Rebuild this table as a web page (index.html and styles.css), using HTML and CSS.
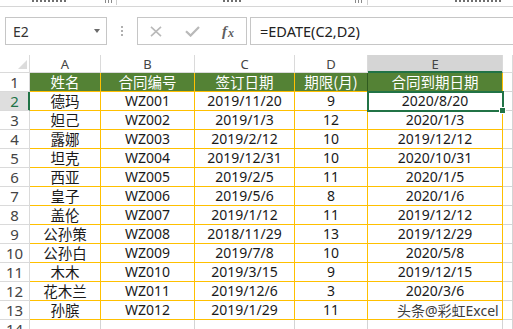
FILE: index.html
```html
<!DOCTYPE html>
<html lang="zh-CN">
<head>
<meta charset="utf-8">
<title>EDATE</title>
<link rel="stylesheet" href="styles.css">
</head>
<body>
<div class="ribbon">
  <span class="frag f1"></span>
  <span class="icon i1"></span>
  <span class="sep s1"></span>
  <span class="frag f2"></span>
  <span class="icon i2"></span>
  <span class="sep s2"></span>
  <span class="frag f3"></span>
</div>

<div class="fbar">
  <div class="namebox"><span>E2</span><span class="tri"></span></div>
  <div class="dots"><i></i><i></i><i></i></div>
  <div class="fnbox">
    <svg class="ico-x" width="12" height="11" viewBox="0 0 12 11"><path d="M1 0.8 L11 10.2 M11 0.8 L1 10.2" stroke="#b9b9b9" stroke-width="1.6" fill="none"/></svg>
    <svg class="ico-ok" width="15" height="11" viewBox="0 0 15 11"><path d="M1 5.2 L5.6 9.6 L14 1" stroke="#b9b9b9" stroke-width="2.2" fill="none"/></svg>
    <span class="fx"><span class="fx-f">f</span><span class="fx-x">x</span></span>
  </div>
  <div class="formula">=EDATE(C2,D2)</div>
</div>

<div class="sheet">
  <div class="row colhead">
    <div class="corner"><span class="corner-tri"></span></div>
    <div>A</div><div>B</div><div>C</div><div>D</div><div class="colsel">E</div><div></div>
  </div>
  <div class="row">
    <div class="rh">1</div>
    <div class="c hd zh">姓名</div><div class="c hd zh">合同编号</div><div class="c hd zh">签订日期</div><div class="c hd zh dsel">期限(月)</div><div class="c hd zh">合同到期日期</div><div class="g"></div>
  </div>
  <div class="row">
    <div class="rh rsel">2</div>
    <div class="c zh">德玛</div><div class="c">WZ001</div><div class="c">2019/11/20</div><div class="c">9</div><div class="c">2020/8/20</div><div class="g"></div>
  </div>
  <div class="row">
    <div class="rh">3</div>
    <div class="c zh">妲己</div><div class="c">WZ002</div><div class="c">2019/1/3</div><div class="c">12</div><div class="c">2020/1/3</div><div class="g"></div>
  </div>
  <div class="row">
    <div class="rh">4</div>
    <div class="c zh">露娜</div><div class="c">WZ003</div><div class="c">2019/2/12</div><div class="c">10</div><div class="c">2019/12/12</div><div class="g"></div>
  </div>
  <div class="row">
    <div class="rh">5</div>
    <div class="c zh">坦克</div><div class="c">WZ004</div><div class="c">2019/12/31</div><div class="c">10</div><div class="c">2020/10/31</div><div class="g"></div>
  </div>
  <div class="row">
    <div class="rh">6</div>
    <div class="c zh">西亚</div><div class="c">WZ005</div><div class="c">2019/2/5</div><div class="c">11</div><div class="c">2020/1/5</div><div class="g"></div>
  </div>
  <div class="row">
    <div class="rh">7</div>
    <div class="c zh">皇子</div><div class="c">WZ006</div><div class="c">2019/5/6</div><div class="c">8</div><div class="c">2020/1/6</div><div class="g"></div>
  </div>
  <div class="row">
    <div class="rh">8</div>
    <div class="c zh">盖伦</div><div class="c">WZ007</div><div class="c">2019/1/12</div><div class="c">11</div><div class="c">2019/12/12</div><div class="g"></div>
  </div>
  <div class="row">
    <div class="rh">9</div>
    <div class="c zh">公孙策</div><div class="c">WZ008</div><div class="c">2018/11/29</div><div class="c">13</div><div class="c">2019/12/29</div><div class="g"></div>
  </div>
  <div class="row">
    <div class="rh">10</div>
    <div class="c zh">公孙白</div><div class="c">WZ009</div><div class="c">2019/7/8</div><div class="c">10</div><div class="c">2020/5/8</div><div class="g"></div>
  </div>
  <div class="row">
    <div class="rh">11</div>
    <div class="c zh">木木</div><div class="c">WZ010</div><div class="c">2019/3/15</div><div class="c">9</div><div class="c">2019/12/15</div><div class="g"></div>
  </div>
  <div class="row">
    <div class="rh">12</div>
    <div class="c zh">花木兰</div><div class="c">WZ011</div><div class="c">2019/12/6</div><div class="c">3</div><div class="c">2020/3/6</div><div class="g"></div>
  </div>
  <div class="row">
    <div class="rh">13</div>
    <div class="c zh">孙膑</div><div class="c">WZ012</div><div class="c">2019/1/29</div><div class="c">11</div><div class="c"></div><div class="g"></div>
  </div>
  <div class="row">
    <div class="rh">14</div>
    <div class="g"></div><div class="g"></div><div class="g"></div><div class="g"></div><div class="g"></div><div class="g"></div>
  </div>

  <div class="sel"></div>
  <div class="handle"></div>
  <div class="watermark">头条@彩虹Excel</div>
</div>
</body>
</html>
```

FILE: styles.css
```css
html, body {
  margin: 0;
  padding: 0;
  height: 329px;
  overflow: hidden;
  background: #ffffff;
}

body {
  font-family: "Noto Sans", "Noto Sans CJK SC", sans-serif;
  color: #1e1e1e;
}

/* cropped ribbon remnant */
.ribbon {
  height: 6px;
  border-bottom: 1px solid #d6d6d6;
  display: flex;
  align-items: flex-start;
}
.frag {
  height: 2px;
  background: repeating-linear-gradient(90deg, #6f6f6f 0 2px, transparent 2px 4px);
}
.icon {
  height: 3px;
  background: repeating-linear-gradient(90deg, #8a8a8a 0 1px, transparent 1px 3px);
}
.sep {
  width: 1px;
  height: 5px;
  background: #cfcfcf;
}
.f1 { margin-left: 32px; width: 36px; }
.i1 { margin-left: 37px; width: 7px; }
.s1 { margin-left: 4px; }
.f2 { margin-left: 106px; width: 19px; }
.i2 { margin-left: 113px; width: 7px; }
.s2 { margin-left: 5px; }
.f3 { margin-left: 87px; width: 47px; }

/* formula bar */
.fbar {
  display: flex;
  height: 28px;
  margin-top: 10px;
}
.namebox {
  box-sizing: border-box;
  width: 102px;
  margin-left: 5px;
  border: 1px solid #c6c6c6;
  display: flex;
  align-items: center;
  justify-content: space-between;
  padding: 0 6px 0 7px;
  font-size: 14px;
  color: #333;
}
.tri {
  width: 0;
  height: 0;
  border-left: 3.5px solid transparent;
  border-right: 3.5px solid transparent;
  border-top: 4px solid #6a6a6a;
}
.dots {
  width: 30px;
  display: flex;
  flex-direction: column;
  align-items: center;
  justify-content: center;
  gap: 2px;
}
.dots i {
  width: 2px;
  height: 2px;
  background: #b0b0b0;
}
.fnbox {
  box-sizing: border-box;
  width: 110px;
  border: 1px solid #c6c6c6;
  display: flex;
  align-items: center;
  padding-left: 12px;
}
.ico-ok { margin-left: 23px; }
.fx {
  margin-left: 22px;
  font-family: "Liberation Serif", serif;
  font-style: italic;
  font-weight: bold;
  color: #5f5f5f;
  font-size: 15px;
  line-height: 1;
}
.fx-x {
  font-size: 12px;
  position: relative;
  top: 1px;
  margin-left: 1px;
}
.formula {
  box-sizing: border-box;
  flex: 1;
  margin-left: 3px;
  margin-right: -6px;
  border: 1px solid #c6c6c6;
  padding-left: 9px;
  font-size: 14.5px;
  line-height: 26px;
  color: #222;
}

/* sheet */
.sheet {
  position: relative;
  margin-top: 10px;
}
.row {
  display: grid;
  grid-template-columns: 30px 71px 94px 100px 73px 135px 1fr;
  height: 19px;
}
.row > div {
  box-sizing: border-box;
  border-right: 1px solid #d4d4d4;
  border-bottom: 1px solid #d4d4d4;
  text-align: center;
  font-size: 14px;
  line-height: 18px;
  white-space: nowrap;
}
.colhead {
  height: 18px;
}
.colhead > div {
  font-size: 13px;
  line-height: 16px;
  padding-top: 1px;
  color: #444;
  border-color: #dadada;
}
.corner {
  position: relative;
}
.corner-tri {
  position: absolute;
  right: 2px;
  bottom: 3px;
  width: 0;
  height: 0;
  border-left: 9px solid transparent;
  border-bottom: 9px solid #dcdcdc;
}
.colsel {
  background: #d5d5d5;
  color: #217346;
  border-bottom-color: #217346 !important;
  box-shadow: inset 0 -1px 0 #217346;
}
.rh {
  font-size: 15px !important;
  line-height: 17px !important;
  padding-top: 1px;
  color: #444;
  border-color: #dadada !important;
}
.rsel {
  background: #dedede;
  color: #217346;
  border-right-color: #217346 !important;
  box-shadow: inset -1px 0 0 #217346;
}
.c {
  border-color: #ffc000 !important;
  color: #1a1a1a;
}
.hd {
  background: #548235;
  color: #ffffff !important;
}
.dsel {
  border-right-color: #2f5a1f !important;
}
.zh {
  font-family: "Noto Sans CJK SC", sans-serif;
  font-size: 14.5px !important;
  line-height: 18px;
}

/* overlays */
.sel {
  position: absolute;
  left: 367px;
  top: 36px;
  width: 137px;
  height: 21px;
  box-sizing: border-box;
  border: 2px solid #217346;
}
.handle {
  position: absolute;
  left: 499px;
  top: 52px;
  width: 5px;
  height: 5px;
  background: #217346;
  border: 1px solid #ffffff;
}
.watermark {
  position: absolute;
  left: 397px;
  top: 248px;
  font-family: "Noto Sans", "Noto Sans CJK SC", sans-serif;
  font-size: 14px;
  line-height: 16px;
  color: #3c3c3c;
  text-shadow: 0 0 1px #fff, 1px 0 0 #fff, -1px 0 0 #fff, 0 1px 0 #fff, 0 -1px 0 #fff;
  white-space: nowrap;
}
```
